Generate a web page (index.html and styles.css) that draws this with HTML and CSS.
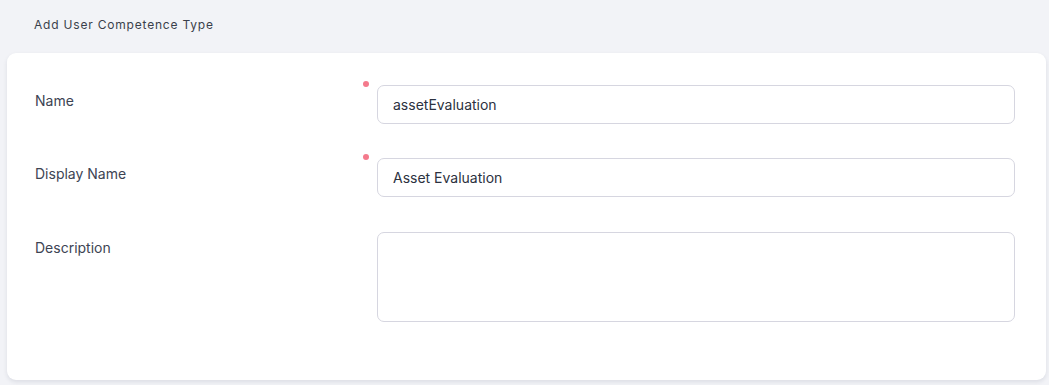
FILE: index.html
```html
<!DOCTYPE HTML>
<html lang="en">

<head>
  <meta charset="UTF-8">
  <title>Add User Competence Type</title>
  <link rel="stylesheet" href="styles.css">
</head>

<body>
  <div class="page">
    <h1 class="page-title">Add User Competence Type</h1>

    <form class="card">
      <div class="form-grid">
        <label class="field-label" for="name">Name</label>
        <div class="field required">
          <input id="name" class="text-input" type="text" value="assetEvaluation">
        </div>

        <label class="field-label" for="displayName">Display Name</label>
        <div class="field required">
          <input id="displayName" class="text-input" type="text" value="Asset Evaluation">
        </div>

        <label class="field-label desc-label" for="description">Description</label>
        <div class="field">
          <textarea id="description" class="text-area"></textarea>
        </div>
      </div>
    </form>
  </div>
</body>

</html>
```

FILE: styles.css
```css
* {
  box-sizing: border-box;
  margin: 0;
  padding: 0;
}

body {
  background-color: #f2f3f7;
  color: #3d4453;
  font-family: Inter, "Noto Sans", sans-serif;
  width: 1049px;
  height: 385px;
  overflow: hidden;
}

.page {
  padding: 0 3px 0 7px;
}

.page-title {
  font-size: 12px;
  font-weight: 400;
  letter-spacing: 0.8px;
  color: #3a3f4b;
  line-height: 16px;
  padding: 17px 0 20px 27px;
}

.card {
  background-color: #fff;
  border-radius: 9px;
  box-shadow: 0 2px 4px rgba(30, 40, 70, 0.10);
  padding: 32px 31px 58px 28px;
}

.form-grid {
  display: grid;
  grid-template-columns: 342px 1fr;
  row-gap: 34px;
}

.field-label {
  font-size: 14px;
  line-height: 18px;
  padding-top: 7px;
  color: #3d4453;
}

.desc-label {
  padding-top: 8px;
}

.field {
  position: relative;
}

/* 필수 표시 점 */
.required::before {
  content: "";
  position: absolute;
  left: -14px;
  top: -4px;
  width: 6px;
  height: 6px;
  border-radius: 50%;
  background-color: #f47a8c;
}

.text-input,
.text-area {
  display: block;
  width: 100%;
  border: 1px solid #d6d6e0;
  border-radius: 7px;
  background-color: #fff;
  font-family: Inter, "Noto Sans", sans-serif;
  font-size: 14px;
  color: #2c3140;
  padding: 0 15px;
  outline: none;
}

.text-input {
  height: 39px;
}

.text-area {
  height: 90px;
  margin-top: 1px;
  resize: none;
  padding-top: 10px;
}
```
